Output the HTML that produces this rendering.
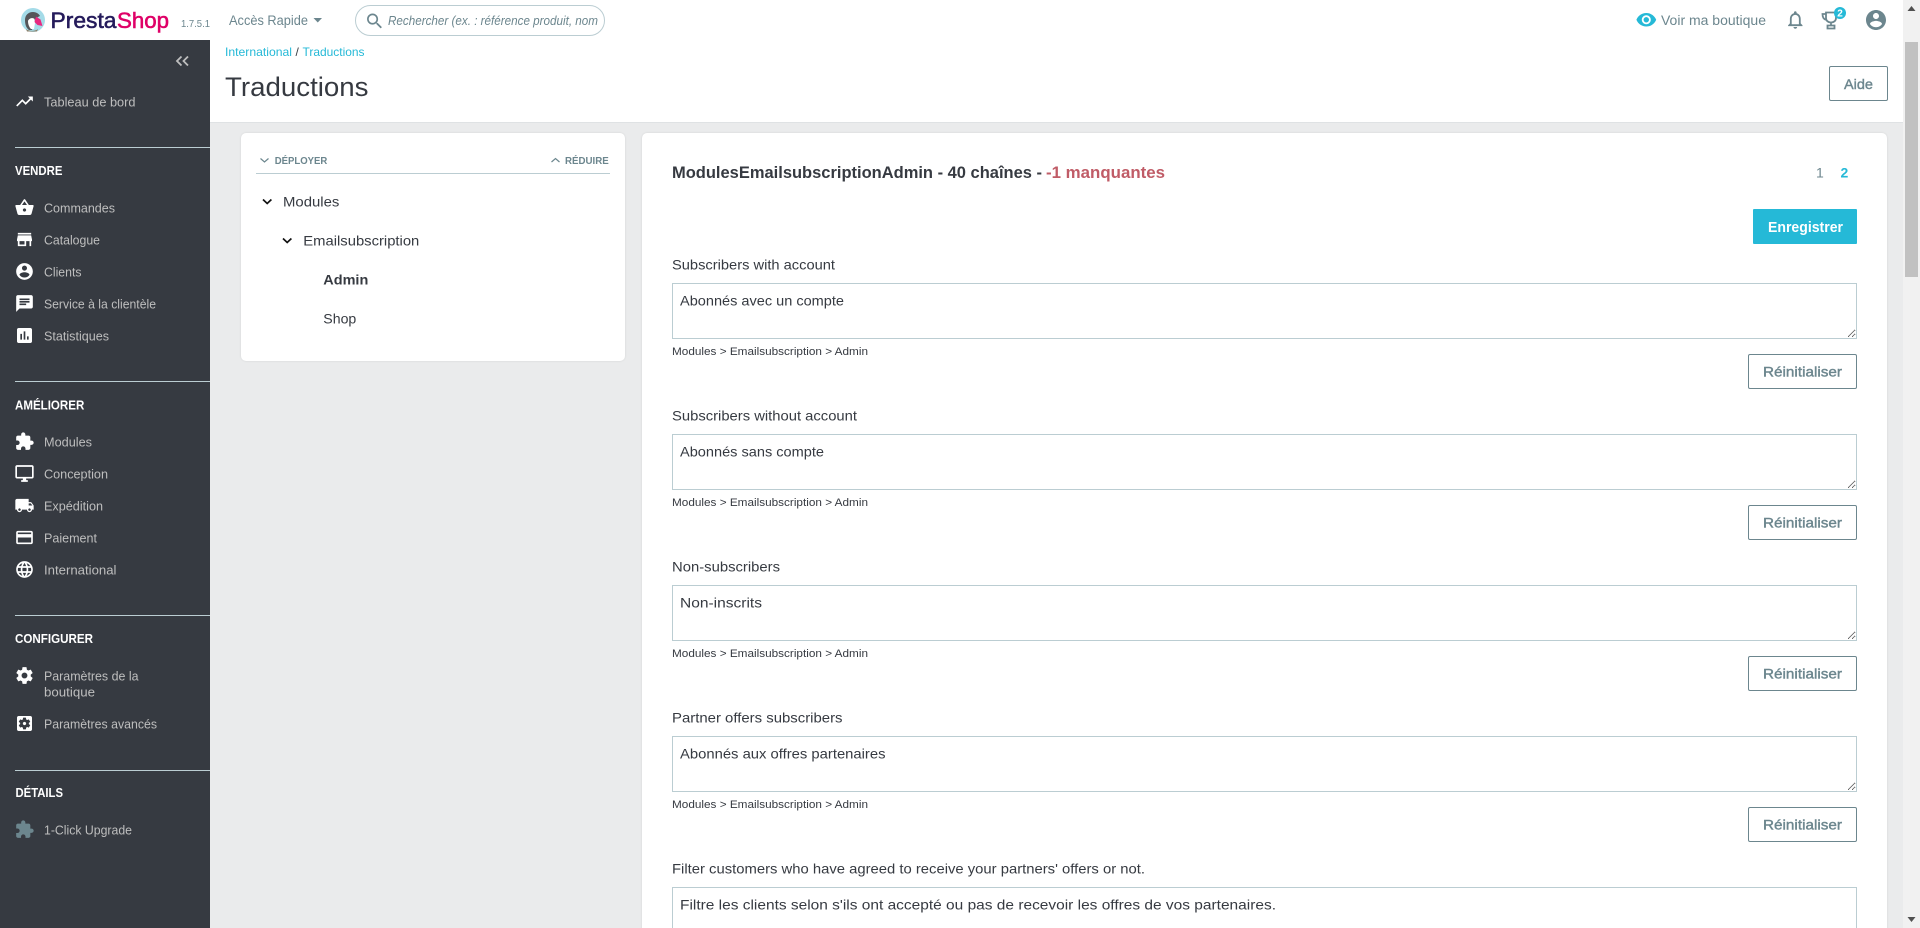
<!DOCTYPE html>
<html lang="fr">
<head>
<meta charset="utf-8">
<title>Traductions • PrestaShop</title>
<style>
html,body{margin:0;padding:0;width:1920px;height:928px;overflow:hidden;background:#eaebec;font-family:"Liberation Sans",Arial,sans-serif}
body{position:relative}
div,textarea,button{position:absolute;box-sizing:border-box;margin:0}
#top{left:0;top:0;width:1903px;height:40px;background:#fff}
#side{left:0;top:40px;width:210px;height:888px;background:#363a41}
#head{left:210px;top:40px;width:1693px;height:82px;background:#fff;border-bottom:0;box-shadow:0 1px 0 #dfe2e4}
#search{left:355px;top:5px;width:250px;height:31px;border:1px solid #bbcdd2;border-radius:16px;background:#fff}
.card{background:#fff;border-radius:5px;box-shadow:0 0 2px rgba(0,0,0,.1)}
.rule{left:15px;width:195px;height:1px;background:#bbcdd2}
textarea{left:672px;width:1185px;height:56px;border:1px solid #bbcdd2;background:#fff;resize:vertical;outline:0;padding:0;border-radius:0}
.reset{left:1748px;width:109px;height:35px;border:1px solid #6c868e;border-radius:2px;background:#fff;padding:0}
#aide{left:1829px;top:66px;width:59px;height:35px;border:1px solid #6c868e;border-radius:2px;background:#fff;padding:0}
#save{left:1753px;top:209px;width:104px;height:35px;background:#25b9d7;border:0;border-radius:1px;padding:0}
#sb{left:1903px;top:0;width:17px;height:928px;background:#f1f1f1}
#thumb{left:1905px;top:42px;width:13px;height:235px;background:#c1c1c1}
svg#o{position:absolute;left:0;top:0;pointer-events:none}
text{font-family:"Liberation Sans",Arial,sans-serif}
.n{font-size:13px;fill:#bebebe}
.h{font-size:12.5px;font-weight:700;fill:#fff}
.l{font-size:14px;fill:#363a41}
.k{font-size:11px;fill:#363a41}
.b{font-size:14px;fill:#6c868e;stroke:#6c868e;stroke-width:.4}
.i{fill:#fff}
</style>
</head>
<body>
<div id="top"></div>
<div id="side"></div>
<div id="head"></div>
<div id="search"></div>
<div class="card" style="left:241px;top:133px;width:384px;height:228px"></div>
<div class="card" style="left:642px;top:133px;width:1245px;height:800px"></div>
<div style="left:256px;top:173px;width:354px;height:1px;background:#bbcdd2"></div>
<div class="rule" style="top:147px"></div>
<div class="rule" style="top:381px"></div>
<div class="rule" style="top:615px"></div>
<div class="rule" style="top:770px"></div>
<textarea style="top:283px" readonly></textarea>
<textarea style="top:434px" readonly></textarea>
<textarea style="top:585px" readonly></textarea>
<textarea style="top:736px" readonly></textarea>
<textarea style="top:887px" readonly></textarea>
<button class="reset" style="top:354px"></button>
<button class="reset" style="top:505px"></button>
<button class="reset" style="top:656px"></button>
<button class="reset" style="top:807px"></button>
<button id="aide"></button>
<button id="save"></button>
<div id="sb"></div>
<div id="thumb"></div>

<svg id="o" width="1920" height="928" viewBox="0 0 1920 928" xmlns="http://www.w3.org/2000/svg">
  <!-- logo -->
  <circle cx="33" cy="20" r="12" fill="#a4dbe8"/>
  <path d="M25 20c0-5 3.500-8 8-8 3.500 0 6 2 7 4l-4 2-3 6-1 6h-3c-3-2-4-6-4-10z" fill="#55565a"/>
  <path d="M28 21c1-3 5-3.500 6.500-2l.5 4-1 6h-3c-2-2-3-5-3-8z" fill="#fff"/>
  <path d="M36 16.500l4.500 3 2 6.500-5-1-3-3z" fill="#e6287f"/>
  <path d="M26 29c3 2.500 9 2.500 12 0l-1 2.500H27z" fill="#8a7f6a"/>
  <text x="50.500" y="28" font-size="22" fill="#251b5b" stroke="#251b5b" stroke-width=".55" textLength="66" lengthAdjust="spacingAndGlyphs">Presta</text>
  <text x="117" y="28" font-size="22" fill="#df0067" stroke="#df0067" stroke-width=".55" textLength="52" lengthAdjust="spacingAndGlyphs">Shop</text>
  <text x="181" y="27" font-size="10.5" fill="#6c868e" textLength="29" lengthAdjust="spacingAndGlyphs">1.7.5.1</text>
  <text x="229" y="25" font-size="13.5" fill="#6c868e" textLength="79" lengthAdjust="spacingAndGlyphs">Accès Rapide</text>
  <path d="M313.500 18h8.500l-4.250 4.500z" fill="#6c868e"/>
  <g transform="translate(364.5,11) scale(.85)"><path fill="#6c868e" d="M15.5 14h-.79l-.28-.27C15.41 12.59 16 11.11 16 9.5 16 5.91 13.09 3 9.5 3S3 5.91 3 9.5 5.91 16 9.5 16c1.61 0 3.09-.59 4.23-1.57l.27.28v.79l5 4.99L20.49 19l-4.99-5zm-6 0C7.01 14 5 11.99 5 9.5S7.01 5 9.5 5 14 7.01 14 9.5 11.99 14 9.5 14z"/></g>
  <text x="388" y="25" font-size="12.5" font-style="italic" fill="#6c868e" textLength="210" lengthAdjust="spacingAndGlyphs">Rechercher (ex. : référence produit, nom</text>

  <!-- top right -->
  <g transform="translate(1635.5,9) scale(.9)"><path fill="#25b9d7" d="M12 4.5C7 4.5 2.73 7.61 1 12c1.73 4.39 6 7.5 11 7.5s9.27-3.11 11-7.5c-1.73-4.39-6-7.5-11-7.5zM12 17c-2.76 0-5-2.24-5-5s2.24-5 5-5 5 2.24 5 5-2.24 5-5 5zm0-8c-1.66 0-3 1.34-3 3s1.34 3 3 3 3-1.34 3-3-1.34-3-3-3z"/></g>
  <text x="1661" y="25" font-size="13.5" fill="#6c868e" textLength="105" lengthAdjust="spacingAndGlyphs">Voir ma boutique</text>
  <g transform="translate(1784.5,9) scale(.9)"><path fill="#6c868e" d="M12 22c1.1 0 2-.9 2-2h-4c0 1.1.9 2 2 2zm6-6v-5c0-3.07-1.63-5.64-4.5-6.32V4c0-.83-.67-1.5-1.5-1.5s-1.5.67-1.5 1.5v.68C7.64 5.36 6 7.92 6 11v5l-2 2v1h16v-1l-2-2zm-2 1H8v-6c0-2.48 1.51-4.5 4-4.5s4 2.02 4 4.5v6z"/></g>
  <path d="M1826 12.500h10v5.500c0 2.600-2 4.500-5 4.500s-5-1.900-5-4.500zM1826 14h-3.500c0 3.500 1.200 5.500 4 6M1831 22.500v3M1827.500 25.500h7v3h-7z" fill="none" stroke="#6c868e" stroke-width="1.8"/>
  <circle cx="1840" cy="13" r="6" fill="#25b9d7"/>
  <text x="1840" y="16.5" font-size="10" font-weight="700" fill="#fff" text-anchor="middle">2</text>
  <g transform="translate(1864,8) scale(1)"><path fill="#6c868e" d="M12 2C6.48 2 2 6.48 2 12s4.48 10 10 10 10-4.48 10-10S17.52 2 12 2zm0 3c1.66 0 3 1.34 3 3s-1.34 3-3 3-3-1.34-3-3 1.34-3 3-3zm0 14.2c-2.5 0-4.71-1.28-6-3.22.03-1.99 4-3.08 6-3.08 1.99 0 5.97 1.09 6 3.08-1.29 1.94-3.5 3.22-6 3.22z"/></g>

  <!-- sidebar -->
  <path d="M181.500 56.500l-4.500 4.500 4.500 4.500M188 56.500l-4.500 4.500 4.500 4.500" fill="none" stroke="#bebebe" stroke-width="1.8"/>
  <g transform="translate(14.5,91.5) scale(.8333)"><path class="i" d="M16 6l2.29 2.29-4.88 4.88-4-4L2 16.59 3.41 18l6-6 4 4 6.3-6.29L22 12V6z"/></g>
  <text class="n" x="44" y="106.5" textLength="91.5" lengthAdjust="spacingAndGlyphs">Tableau de bord</text>

  <text class="h" x="15" y="175" textLength="47.4" lengthAdjust="spacingAndGlyphs">VENDRE</text>
  <g transform="translate(14.5,197.5) scale(.8333)"><path class="i" d="M17.21 9l-4.38-6.56c-.19-.28-.51-.42-.83-.42-.32 0-.64.14-.83.43L6.79 9H2c-.55 0-1 .45-1 1 0 .09.01.18.04.27l2.54 9.27c.23.84 1 1.46 1.92 1.46h13c.92 0 1.69-.62 1.93-1.46l2.54-9.27L23 10c0-.55-.45-1-1-1h-4.79zM9 9l3-4.4L15 9H9zm3 8c-1.1 0-2-.9-2-2s.9-2 2-2 2 .9 2 2-.9 2-2 2z"/></g>
  <text class="n" x="44" y="212.5" textLength="71" lengthAdjust="spacingAndGlyphs">Commandes</text>
  <g transform="translate(14.5,229.5) scale(.8333)"><path class="i" d="M20 4H4v2h16V4zm1 10v-2l-1-5H4l-1 5v2h1v6h10v-6h4v6h2v-6h1zm-9 4H6v-4h6v4z"/></g>
  <text class="n" x="44" y="244.5" textLength="56" lengthAdjust="spacingAndGlyphs">Catalogue</text>
  <g transform="translate(14.5,261.5) scale(.8333)"><path class="i" d="M12 2C6.48 2 2 6.48 2 12s4.48 10 10 10 10-4.48 10-10S17.52 2 12 2zm0 3c1.66 0 3 1.34 3 3s-1.34 3-3 3-3-1.34-3-3 1.34-3 3-3zm0 14.2c-2.5 0-4.71-1.28-6-3.22.03-1.99 4-3.08 6-3.08 1.99 0 5.97 1.09 6 3.08-1.29 1.94-3.5 3.22-6 3.22z"/></g>
  <text class="n" x="44" y="276.5" textLength="37.5" lengthAdjust="spacingAndGlyphs">Clients</text>
  <g transform="translate(14.5,293.5) scale(.8333)"><path class="i" d="M20 2H4c-1.1 0-1.99.9-1.99 2L2 22l4-4h14c1.1 0 2-.9 2-2V4c0-1.1-.9-2-2-2zM6 9h12v2H6V9zm8 5H6v-2h8v2zm4-6H6V6h12v2z"/></g>
  <text class="n" x="44" y="308.5" textLength="112" lengthAdjust="spacingAndGlyphs">Service à la clientèle</text>
  <g transform="translate(14.5,325.5) scale(.8333)"><path class="i" d="M19 3H5c-1.1 0-2 .9-2 2v14c0 1.1.9 2 2 2h14c1.1 0 2-.9 2-2V5c0-1.1-.9-2-2-2zM9 17H7v-7h2v7zm4 0h-2V7h2v10zm4 0h-2v-4h2v4z"/></g>
  <text class="n" x="44" y="340.5" textLength="65" lengthAdjust="spacingAndGlyphs">Statistiques</text>

  <text class="h" x="15" y="409.5" textLength="69.3" lengthAdjust="spacingAndGlyphs">AMÉLIORER</text>
  <g transform="translate(14.5,431.5) scale(.8333)"><path class="i" d="M20.5 11H19V7c0-1.1-.9-2-2-2h-4V3.5C13 2.12 11.88 1 10.5 1S8 2.12 8 3.5V5H4c-1.1 0-1.99.9-1.99 2v3.8H3.5c1.49 0 2.7 1.21 2.7 2.7s-1.21 2.7-2.7 2.7H2V20c0 1.1.9 2 2 2h3.8v-1.5c0-1.49 1.21-2.7 2.7-2.7 1.49 0 2.7 1.21 2.7 2.7V22H17c1.1 0 2-.9 2-2v-4h1.5c1.38 0 2.5-1.12 2.5-2.5S21.88 11 20.5 11z"/></g>
  <text class="n" x="44" y="446.5" textLength="48" lengthAdjust="spacingAndGlyphs">Modules</text>
  <g transform="translate(14.5,463.5) scale(.8333)"><path class="i" d="M21 2H3c-1.1 0-2 .9-2 2v12c0 1.1.9 2 2 2h7v2H8v2h8v-2h-2v-2h7c1.1 0 2-.9 2-2V4c0-1.1-.9-2-2-2zm0 14H3V4h18v12z"/></g>
  <text class="n" x="44" y="478.5" textLength="64" lengthAdjust="spacingAndGlyphs">Conception</text>
  <g transform="translate(14.5,495.5) scale(.8333)"><path class="i" d="M20 8h-3V4H3c-1.1 0-2 .9-2 2v11h2c0 1.66 1.34 3 3 3s3-1.34 3-3h6c0 1.66 1.34 3 3 3s3-1.34 3-3h2v-5l-3-4zM6 18.5c-.83 0-1.5-.67-1.5-1.5s.67-1.5 1.5-1.5 1.5.67 1.5 1.5-.67 1.5-1.5 1.5zm13.5-9l1.96 2.5H17V9.5h2.5zm-1.5 9c-.83 0-1.5-.67-1.5-1.5s.67-1.5 1.5-1.5 1.5.67 1.5 1.5-.67 1.5-1.5 1.5z"/></g>
  <text class="n" x="44" y="510.5" textLength="59" lengthAdjust="spacingAndGlyphs">Expédition</text>
  <g transform="translate(14.5,527.5) scale(.8333)"><path class="i" d="M20 4H4c-1.11 0-1.99.89-1.99 2L2 18c0 1.11.89 2 2 2h16c1.11 0 2-.89 2-2V6c0-1.11-.89-2-2-2zm0 14H4v-6h16v6zm0-10H4V6h16v2z"/></g>
  <text class="n" x="44" y="542.5" textLength="53" lengthAdjust="spacingAndGlyphs">Paiement</text>
  <g transform="translate(14.5,559.5) scale(.8333)"><path class="i" d="M11.99 2C6.47 2 2 6.48 2 12s4.47 10 9.99 10C17.52 22 22 17.52 22 12S17.52 2 11.99 2zm6.93 6h-2.95c-.32-1.25-.78-2.45-1.38-3.56 1.84.63 3.37 1.91 4.33 3.56zM12 4.04c.83 1.2 1.48 2.53 1.91 3.96h-3.82c.43-1.43 1.08-2.76 1.91-3.96zM4.26 14C4.1 13.36 4 12.69 4 12s.1-1.36.26-2h3.38c-.08.66-.14 1.32-.14 2 0 .68.06 1.34.14 2H4.26zm.82 2h2.95c.32 1.25.78 2.45 1.38 3.56-1.84-.63-3.37-1.9-4.33-3.56zm2.95-8H5.08c.96-1.66 2.49-2.93 4.33-3.56C8.81 5.55 8.35 6.75 8.03 8zM12 19.96c-.83-1.2-1.48-2.53-1.91-3.96h3.82c-.43 1.43-1.08 2.76-1.91 3.96zM14.34 14H9.66c-.09-.66-.16-1.32-.16-2 0-.68.07-1.35.16-2h4.68c.09.65.16 1.32.16 2 0 .68-.07 1.34-.16 2zm.25 5.56c.6-1.11 1.06-2.31 1.38-3.56h2.95c-.96 1.65-2.49 2.93-4.33 3.56zM16.36 14c.08-.66.14-1.32.14-2 0-.68-.06-1.34-.14-2h3.38c.16.64.26 1.31.26 2s-.1 1.36-.26 2h-3.38z"/></g>
  <text class="n" x="44" y="574.5" textLength="72.5" lengthAdjust="spacingAndGlyphs">International</text>

  <text class="h" x="15" y="643" textLength="78" lengthAdjust="spacingAndGlyphs">CONFIGURER</text>
  <g transform="translate(14.5,665.5) scale(.8333)"><path class="i" d="M19.43 12.98c.04-.32.07-.64.07-.98s-.03-.66-.07-.98l2.11-1.65c.19-.15.24-.42.12-.64l-2-3.46c-.12-.22-.39-.3-.61-.22l-2.49 1c-.52-.4-1.08-.73-1.69-.98l-.38-2.65C14.46 2.18 14.25 2 14 2h-4c-.25 0-.46.18-.49.42l-.38 2.65c-.61.25-1.17.59-1.69.98l-2.49-1c-.23-.09-.49 0-.61.22l-2 3.46c-.13.22-.07.49.12.64l2.11 1.65c-.04.32-.07.65-.07.98s.03.66.07.98l-2.11 1.65c-.19.15-.24.42-.12.64l2 3.46c.12.22.39.3.61.22l2.49-1c.52.4 1.08.73 1.69.98l.38 2.65c.03.24.24.42.49.42h4c.25 0 .46-.18.49-.42l.38-2.65c.61-.25 1.17-.59 1.69-.98l2.49 1c.23.09.49 0 .61-.22l2-3.46c.12-.22.07-.49-.12-.64l-2.11-1.65zM12 15.5c-1.93 0-3.5-1.57-3.5-3.5s1.57-3.5 3.5-3.5 3.5 1.57 3.5 3.5-1.57 3.5-3.5 3.5z"/></g>
  <text class="n" x="44" y="680.5" textLength="94.5" lengthAdjust="spacingAndGlyphs">Paramètres de la</text>
  <text class="n" x="44" y="696.5" textLength="51" lengthAdjust="spacingAndGlyphs">boutique</text>
  <g transform="translate(14.5,713.5) scale(.8333)"><path class="i" d="M12 10c-1.1 0-2 .9-2 2s.9 2 2 2 2-.9 2-2-.9-2-2-2zm7-7H5c-1.11 0-2 .9-2 2v14c0 1.1.89 2 2 2h14c1.11 0 2-.9 2-2V5c0-1.1-.89-2-2-2zm-1.75 9c0 .23-.02.46-.05.68l1.48 1.16c.13.11.17.3.08.45l-1.4 2.42c-.09.15-.27.21-.43.15l-1.74-.7c-.36.28-.76.51-1.18.69l-.26 1.85c-.03.17-.18.3-.35.3h-2.8c-.17 0-.32-.13-.35-.29l-.26-1.85c-.43-.18-.82-.41-1.18-.69l-1.74.7c-.16.06-.34 0-.43-.15l-1.4-2.42c-.09-.15-.05-.34.08-.45l1.48-1.16c-.03-.23-.05-.46-.05-.69 0-.23.02-.46.05-.68l-1.48-1.16c-.13-.11-.17-.3-.08-.45l1.4-2.42c.09-.15.27-.21.43-.15l1.74.7c.36-.28.76-.51 1.18-.69l.26-1.85c.03-.17.18-.3.35-.3h2.8c.17 0 .32.13.35.29l.26 1.85c.43.18.82.41 1.18.69l1.74-.7c.16-.06.34 0 .43.15l1.4 2.42c.09.15.05.34-.08.45l-1.48 1.16c.03.23.05.46.05.69z"/></g>
  <text class="n" x="44" y="728.5" textLength="113" lengthAdjust="spacingAndGlyphs">Paramètres avancés</text>

  <text class="h" x="15.5" y="797" textLength="47.5" lengthAdjust="spacingAndGlyphs">DÉTAILS</text>
  <g transform="translate(14.5,819.5) scale(.8333)"><path fill="#6c868e" d="M20.5 11H19V7c0-1.1-.9-2-2-2h-4V3.5C13 2.12 11.88 1 10.5 1S8 2.12 8 3.5V5H4c-1.1 0-1.99.9-1.99 2v3.8H3.5c1.49 0 2.7 1.21 2.7 2.7s-1.21 2.7-2.7 2.7H2V20c0 1.1.9 2 2 2h3.8v-1.5c0-1.49 1.21-2.7 2.7-2.7 1.49 0 2.7 1.21 2.7 2.7V22H17c1.1 0 2-.9 2-2v-4h1.5c1.38 0 2.5-1.12 2.5-2.5S21.88 11 20.5 11z"/></g>
  <text class="n" x="44" y="834.5" textLength="88" lengthAdjust="spacingAndGlyphs">1-Click Upgrade</text>

  <!-- page head -->
  <text x="225" y="56" font-size="12" fill="#25b9d7" textLength="67" lengthAdjust="spacingAndGlyphs">International</text>
  <text x="295.5" y="56" font-size="12" fill="#363a41">/</text>
  <text x="302.5" y="56" font-size="12" fill="#25b9d7" textLength="62" lengthAdjust="spacingAndGlyphs">Traductions</text>
  <text x="225" y="96" font-size="27" fill="#363a41" textLength="143.5" lengthAdjust="spacingAndGlyphs">Traductions</text>
  <text class="b" x="1844" y="89" textLength="29" lengthAdjust="spacingAndGlyphs">Aide</text>

  <!-- tree -->
  <path d="M260.5 158.5l4 3.5 4-3.5" fill="none" stroke="#6c868e" stroke-width="1.2"/>
  <text x="274.7" y="164" font-size="10.5" font-weight="700" fill="#6c868e" textLength="52.6" lengthAdjust="spacingAndGlyphs">DÉPLOYER</text>
  <path d="M551.5 162l4-3.5 4 3.5" fill="none" stroke="#6c868e" stroke-width="1.2"/>
  <text x="565" y="164" font-size="10.5" font-weight="700" fill="#6c868e" textLength="43.7" lengthAdjust="spacingAndGlyphs">RÉDUIRE</text>
  <path d="M263 199.5l4.2 4 4.2-4" fill="none" stroke="#111" stroke-width="1.7"/>
  <text class="l" x="283" y="206.5" textLength="56.3" lengthAdjust="spacingAndGlyphs">Modules</text>
  <path d="M283 238.5l4.2 4 4.2-4" fill="none" stroke="#111" stroke-width="1.7"/>
  <text class="l" x="303.3" y="245.5" textLength="116" lengthAdjust="spacingAndGlyphs">Emailsubscription</text>
  <text class="l" x="323.3" y="284.5" font-weight="700" textLength="45" lengthAdjust="spacingAndGlyphs">Admin</text>
  <text class="l" x="323.3" y="323.5" textLength="33" lengthAdjust="spacingAndGlyphs">Shop</text>

  <!-- content head -->
  <text x="672" y="178" font-size="16.5" font-weight="700" fill="#363a41" textLength="370" lengthAdjust="spacingAndGlyphs">ModulesEmailsubscriptionAdmin - 40 chaînes -</text>
  <text x="1046" y="178" font-size="16.5" font-weight="700" fill="#c05c67" textLength="119" lengthAdjust="spacingAndGlyphs">-1 manquantes</text>
  <text x="1816" y="177.5" font-size="14" fill="#6c868e">1</text>
  <text x="1840.5" y="177.5" font-size="14" font-weight="700" fill="#25b9d7">2</text>
  <text x="1768" y="232" font-size="15" font-weight="700" fill="#fff" textLength="75" lengthAdjust="spacingAndGlyphs">Enregistrer</text>

  <!-- rows -->
  <text class="l" x="672" y="269.5" textLength="163" lengthAdjust="spacingAndGlyphs">Subscribers with account</text>
  <text class="l" x="680" y="305.5" textLength="164" lengthAdjust="spacingAndGlyphs">Abonnés avec un compte</text>
  <text class="k" x="672" y="355" textLength="196" lengthAdjust="spacingAndGlyphs">Modules &gt; Emailsubscription &gt; Admin</text>
  <text class="b" x="1763" y="376.5" textLength="79" lengthAdjust="spacingAndGlyphs">Réinitialiser</text>

  <text class="l" x="672" y="420.5" textLength="185" lengthAdjust="spacingAndGlyphs">Subscribers without account</text>
  <text class="l" x="680" y="456.5" textLength="144" lengthAdjust="spacingAndGlyphs">Abonnés sans compte</text>
  <text class="k" x="672" y="506" textLength="196" lengthAdjust="spacingAndGlyphs">Modules &gt; Emailsubscription &gt; Admin</text>
  <text class="b" x="1763" y="527.5" textLength="79" lengthAdjust="spacingAndGlyphs">Réinitialiser</text>

  <text class="l" x="672" y="571.5" textLength="108" lengthAdjust="spacingAndGlyphs">Non-subscribers</text>
  <text class="l" x="680" y="607.5" textLength="82" lengthAdjust="spacingAndGlyphs">Non-inscrits</text>
  <text class="k" x="672" y="657" textLength="196" lengthAdjust="spacingAndGlyphs">Modules &gt; Emailsubscription &gt; Admin</text>
  <text class="b" x="1763" y="678.5" textLength="79" lengthAdjust="spacingAndGlyphs">Réinitialiser</text>

  <text class="l" x="672" y="722.5" textLength="170.5" lengthAdjust="spacingAndGlyphs">Partner offers subscribers</text>
  <text class="l" x="680" y="758.5" textLength="205.5" lengthAdjust="spacingAndGlyphs">Abonnés aux offres partenaires</text>
  <text class="k" x="672" y="808" textLength="196" lengthAdjust="spacingAndGlyphs">Modules &gt; Emailsubscription &gt; Admin</text>
  <text class="b" x="1763" y="829.5" textLength="79" lengthAdjust="spacingAndGlyphs">Réinitialiser</text>

  <text class="l" x="672" y="873.5" textLength="473" lengthAdjust="spacingAndGlyphs">Filter customers who have agreed to receive your partners' offers or not.</text>
  <text class="l" x="680" y="909.5" textLength="596" lengthAdjust="spacingAndGlyphs">Filtre les clients selon s'ils ont accepté ou pas de recevoir les offres de vos partenaires.</text>

  <!-- scrollbar arrows -->
  <path d="M1911.5 6l4 5h-8z" fill="#505050"/>
  <path d="M1907.5 917h8l-4 5z" fill="#505050"/>
</svg>
</body>
</html>
